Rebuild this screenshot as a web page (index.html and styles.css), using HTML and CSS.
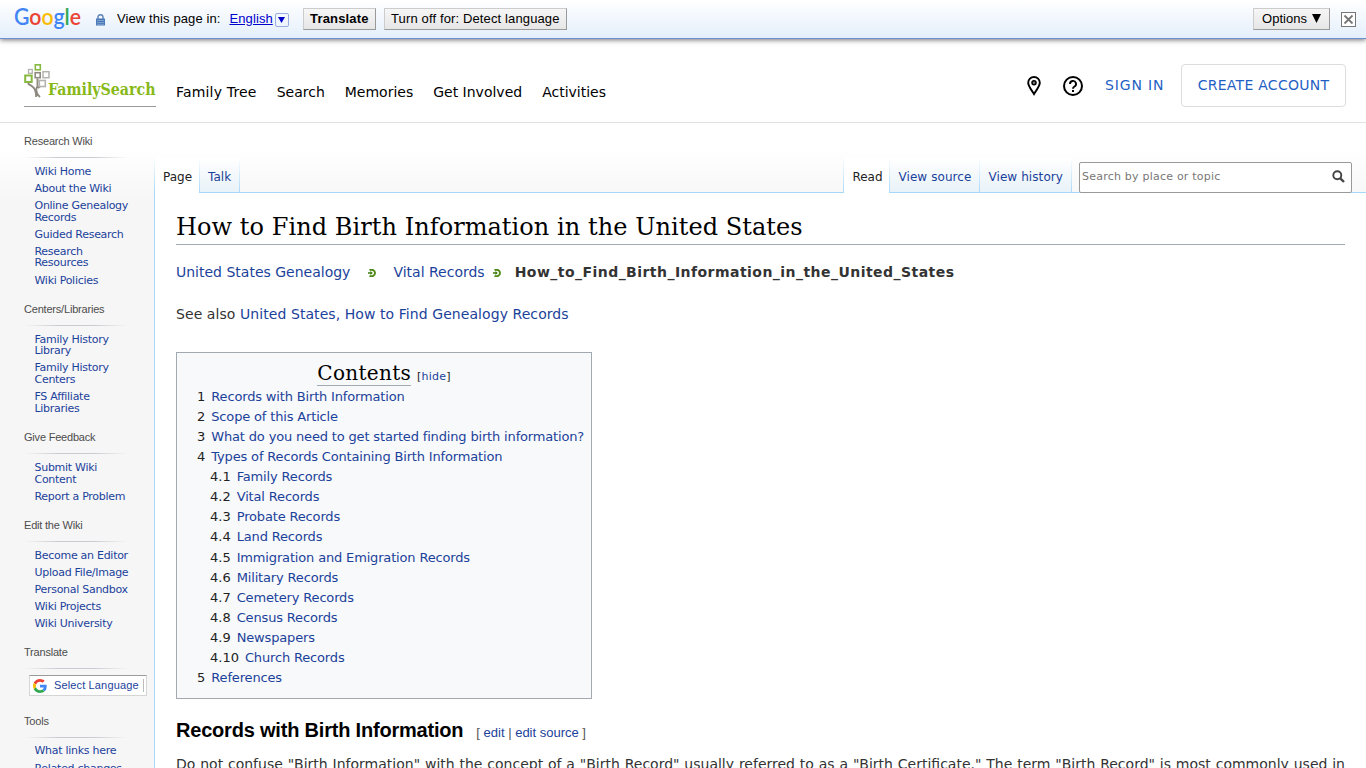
FILE: index.html
```html
<!DOCTYPE html>
<html lang="en">
<head>
    <meta charset="UTF-8">
    <meta name="viewport" content="width=device-width, initial-scale=1.0">
    <title>How to Find Birth Information in the United States</title>
    <link rel="stylesheet" href="styles.css">
</head>
<body>
    <div class="translate-bar">
        <svg class="google-logo" width="69" height="30" viewBox="0 0 69 30">
            <text x="0" y="23" textLength="67" lengthAdjust="spacingAndGlyphs"><tspan fill="#4285f4">G</tspan><tspan fill="#ea4335">o</tspan><tspan fill="#fbbc05">o</tspan><tspan fill="#4285f4">g</tspan><tspan fill="#34a853">l</tspan><tspan fill="#ea4335">e</tspan></text>
        </svg>
        <svg class="lock" width="9" height="12" viewBox="0 0 9 12">
            <path d="M2 5V3a2.5 2.3 0 0 1 5 0v2" fill="none" stroke="#5c84b8" stroke-width="1.4"/>
            <rect x="0" y="4.5" width="9" height="7" fill="#4a79b8"/>
            <path d="M1 6.5h7M1 8.5h7M1 10.3h7" stroke="#8fb0da" stroke-width=".7"/>
        </svg>
        <span class="view-label">View this page in:</span>
        <a class="lang" href="#">English</a>
        <span class="lang-arrow"><svg width="7" height="6" viewBox="0 0 7 6"><path d="M0 0h7L3.5 6z" fill="#0000cc"/></svg></span>
        <button class="bar-btn btn-translate">Translate</button>
        <button class="bar-btn btn-off">Turn off for: Detect language</button>
        <button class="bar-btn btn-options">Options <svg width="9" height="9" viewBox="0 0 9 9"><path d="M0 0h9L4.5 9z" fill="#000"/></svg></button>
        <svg class="close" width="15" height="15" viewBox="0 0 15 15">
            <rect x=".5" y=".5" width="14" height="14" fill="#fff" stroke="#777"/>
            <path d="M3.5 3.5l8 8M11.5 3.5l-8 8" stroke="#777" stroke-width="1.8"/>
        </svg>
    </div>

    <header class="header">
        <a class="logo" href="#">
            <svg width="132" height="42" viewBox="0 0 132 42">
                <g fill="none" stroke="#8f8a80">
                    <path d="M4.500 18.500V20C9 22.500 12 24 12.200 33M13.500 14.500V22C11.500 25 12 30 16 33M14 24L16 22.500" stroke-width="1.900"/>
                    <rect x="11.200" y="8.700" width="5" height="5" stroke-width="1.600"/>
                    <rect x="4.500" y="5.500" width="3.800" height="3.800" stroke="#b4b2ae" stroke-width="1.300"/>
                    <rect x="19" y="7.700" width="6" height="6" stroke="#b4b2ae" stroke-width="1.500"/>
                    <rect x="15.300" y="16.500" width="6" height="6" stroke="#b4b2ae" stroke-width="1.600"/>
                    <rect x="11.300" y=".8" width="5" height="5" stroke="#87b940" stroke-width="1.600"/>
                    <rect x="1.200" y="11.500" width="6.500" height="6.500" stroke="#87b940" stroke-width="2"/>
                </g>
                <text class="logo-text" x="24" y="31" textLength="107.500" lengthAdjust="spacingAndGlyphs">FamilySearch</text>
            </svg>
        </a>
        <nav class="nav">
            <a href="#">Family Tree</a>
            <a href="#">Search</a>
            <a href="#">Memories</a>
            <a href="#">Get Involved</a>
            <a href="#">Activities</a>
        </nav>
        <div class="account">
            <svg class="pin" width="14" height="20" viewBox="0 0 14 20">
                <path d="M7 18C5 14.500 1.200 10.500 1.200 6.800a5.800 5.800 0 0 1 11.600 0C12.800 10.500 9 14.500 7 18z" fill="none" stroke="#000" stroke-width="1.900"/>
                <circle cx="7" cy="6.700" r="2" fill="#777" stroke="#000" stroke-width="1.500"/>
            </svg>
            <svg class="help" width="20" height="20" viewBox="0 0 20 20">
                <circle cx="10" cy="10" r="9" fill="none" stroke="#000" stroke-width="2"/>
                <path d="M7 8a3 3 0 1 1 4.500 2.500C10.300 11.200 10 11.600 10 12.700" fill="none" stroke="#000" stroke-width="1.900"/>
                <rect x="9" y="14" width="2" height="2"/>
            </svg>
            <a class="sign-in" href="#">SIGN IN</a>
            <a class="create" href="#">CREATE ACCOUNT</a>
        </div>
    </header>

    <div class="page">
        <aside class="sidebar">
            <section class="portal">
                <h3>Research Wiki</h3>
                <ul>
                    <li><a href="#">Wiki Home</a></li>
                    <li><a href="#">About the Wiki</a></li>
                    <li><a href="#">Online Genealogy<br>Records</a></li>
                    <li><a href="#">Guided Research</a></li>
                    <li><a href="#">Research<br>Resources</a></li>
                    <li><a href="#">Wiki Policies</a></li>
                </ul>
            </section>
            <section class="portal">
                <h3>Centers/Libraries</h3>
                <ul>
                    <li><a href="#">Family History<br>Library</a></li>
                    <li><a href="#">Family History<br>Centers</a></li>
                    <li><a href="#">FS Affiliate<br>Libraries</a></li>
                </ul>
            </section>
            <section class="portal">
                <h3>Give Feedback</h3>
                <ul>
                    <li><a href="#">Submit Wiki<br>Content</a></li>
                    <li><a href="#">Report a Problem</a></li>
                </ul>
            </section>
            <section class="portal">
                <h3>Edit the Wiki</h3>
                <ul>
                    <li><a href="#">Become an Editor</a></li>
                    <li><a href="#">Upload File/Image</a></li>
                    <li><a href="#">Personal Sandbox</a></li>
                    <li><a href="#">Wiki Projects</a></li>
                    <li><a href="#">Wiki University</a></li>
                </ul>
            </section>
            <section class="portal">
                <h3>Translate</h3>
                <div class="gadget">
                    <svg width="14" height="14" viewBox="0 0 48 48">
                        <path fill="#ea4335" d="M24 9.500c3.540 0 6.710 1.220 9.210 3.600l6.850-6.850C35.900 2.380 30.470 0 24 0 14.620 0 6.510 5.380 2.560 13.220l7.980 6.190C12.430 13.720 17.740 9.500 24 9.500z"/>
                        <path fill="#4285f4" d="M46.980 24.550c0-1.570-.15-3.090-.38-4.550H24v9.020h12.940c-.58 2.960-2.260 5.480-4.780 7.180l7.730 6c4.510-4.180 7.090-10.360 7.090-17.650z"/>
                        <path fill="#fbbc05" d="M10.530 28.590c-.48-1.450-.76-2.990-.76-4.590s.27-3.140.76-4.590l-7.980-6.190C.92 16.460 0 20.120 0 24s.92 7.540 2.560 10.780l7.970-6.190z"/>
                        <path fill="#34a853" d="M24 48c6.480 0 11.930-2.130 15.890-5.810l-7.730-6c-2.150 1.450-4.920 2.300-8.160 2.300-6.260 0-11.570-4.220-13.470-9.910l-7.980 6.190C6.510 42.620 14.620 48 24 48z"/>
                    </svg>
                    <a href="#">Select Language</a>
                </div>
            </section>
            <section class="portal">
                <h3>Tools</h3>
                <ul>
                    <li><a href="#">What links here</a></li>
                    <li><a href="#">Related changes</a></li>
                </ul>
            </section>
        </aside>

        <main class="main">
            <div class="tabs">
                <a class="tab selected" href="#">Page</a>
                <a class="tab" href="#">Talk</a>
                <div class="tabs-right">
                    <a class="tab selected" href="#">Read</a>
                    <a class="tab" href="#">View source</a>
                    <a class="tab" href="#">View history</a>
                </div>
                <div class="search">
                    <span>Search by place or topic</span>
                    <svg width="13" height="13" viewBox="0 0 13 13">
                        <circle cx="5.300" cy="5.300" r="4" fill="none" stroke="#444" stroke-width="1.900"/>
                        <path d="M8.300 8.300l3.700 3.700" stroke="#444" stroke-width="2.400"/>
                    </svg>
                </div>
            </div>

            <article class="content">
                <h1>How to Find Birth Information in the United States</h1>
                <p class="crumbs">
                    <a class="crumb-first" href="#">United States Genealogy</a>
                    <svg class="arrow arrow-first" width="8" height="8" viewBox="0 0 8 8"><path d="M1.500 1C4 .2 7 1 7 4S4 7.800 1.500 7" fill="none" stroke="#4f8a14" stroke-width="1.900"/><path d="M0 3.200h2.500V2L4.800 4 2.500 6V4.800H0z" fill="#3c7a0c"/></svg>
                    <a class="crumb-second" href="#">Vital Records</a>
                    <svg class="arrow arrow-second" width="8" height="8" viewBox="0 0 8 8"><path d="M1.500 1C4 .2 7 1 7 4S4 7.800 1.500 7" fill="none" stroke="#4f8a14" stroke-width="1.900"/><path d="M0 3.200h2.500V2L4.800 4 2.500 6V4.800H0z" fill="#3c7a0c"/></svg>
                    <strong>How_to_Find_Birth_Information_in_the_United_States</strong>
                </p>
                <p class="see-also">See also <a href="#">United States, How to Find Genealogy Records</a></p>

                <div class="toc">
                    <div class="toc-title"><h2>Contents</h2><span class="toggle">[<a href="#">hide</a>]</span></div>
                    <ul>
                        <li><span>1</span><a href="#">Records with Birth Information</a></li>
                        <li><span>2</span><a href="#">Scope of this Article</a></li>
                        <li><span>3</span><a href="#">What do you need to get started finding birth information?</a></li>
                        <li><span>4</span><a href="#">Types of Records Containing Birth Information</a></li>
                        <li class="sub"><span>4.1</span><a href="#">Family Records</a></li>
                        <li class="sub"><span>4.2</span><a href="#">Vital Records</a></li>
                        <li class="sub"><span>4.3</span><a href="#">Probate Records</a></li>
                        <li class="sub"><span>4.4</span><a href="#">Land Records</a></li>
                        <li class="sub"><span>4.5</span><a href="#">Immigration and Emigration Records</a></li>
                        <li class="sub"><span>4.6</span><a href="#">Military Records</a></li>
                        <li class="sub"><span>4.7</span><a href="#">Cemetery Records</a></li>
                        <li class="sub"><span>4.8</span><a href="#">Census Records</a></li>
                        <li class="sub"><span>4.9</span><a href="#">Newspapers</a></li>
                        <li class="sub"><span>4.10</span><a href="#">Church Records</a></li>
                        <li><span>5</span><a href="#">References</a></li>
                    </ul>
                </div>

                <div class="section-head">
                    <h2>Records with Birth Information</h2>
                    <span class="edit">[ <a href="#">edit</a> | <a href="#">edit source</a> ]</span>
                </div>
                <p class="text">Do not confuse "Birth Information" with the concept of a "Birth Record" usually referred to as a "Birth Certificate." The term "Birth Record" is most commonly used in</p>
            </article>
        </main>
    </div>
</body>
</html>
```
FILE: styles.css
```css
* {
    box-sizing: border-box;
}
body {
    margin: 0;
    height: 768px;
    overflow: hidden;
    display: flex;
    flex-direction: column;
    background: #fff;
    font-family: Verdana, "DejaVu Sans", sans-serif;
    color: #333;
}
a {
    color: #1b429b;
    text-decoration: none;
}
h1, h2, h3, p, ul {
    margin: 0;
    padding: 0;
    font-weight: normal;
}
ul {
    list-style: none;
}
svg {
    display: block;
    flex: none;
}

/* translate toolbar */
.translate-bar {
    height: 39px;
    flex: none;
    display: flex;
    align-items: flex-start;
    padding: 8px 10px 0 14px;
    border-bottom: 1px solid #6b8fd0;
    background: linear-gradient(#fff, #e4effb);
    box-shadow: 0 1px 5px rgba(0, 0, 0, .55);
    font: 13px/21px "Liberation Sans", Arial, sans-serif;
    color: #000;
    z-index: 1;
}
.google-logo {
    margin-top: -6px;
    font: 23px Lato, sans-serif;
    font-weight: 600;
}
.lock {
    margin: 6px 12px 0 13px;
}
.view-label {
    letter-spacing: .1px;
}
.lang {
    margin: 0 2px 0 9px;
    color: #0000cc;
    text-decoration: underline;
    letter-spacing: .1px;
}
.lang-arrow {
    width: 14px;
    height: 14px;
    margin-top: 5px;
    border: 1px solid #9aace0;
    border-radius: 2px;
    display: grid;
    place-items: center;
}
.bar-btn {
    height: 22px;
    padding: 0 0 2px;
    border: 1px solid;
    border-color: #ccc #999 #999 #ccc;
    background: linear-gradient(#f6f6f6, #e6e6e6);
    font: 13px/19px "Liberation Sans", Arial, sans-serif;
    color: #000;
}
.btn-translate {
    width: 73px;
    margin-left: 14px;
    font-weight: bold;
    letter-spacing: .15px;
}
.btn-off {
    width: 183px;
    margin-left: 8px;
    letter-spacing: .13px;
}
.btn-options {
    width: 77px;
    margin-left: auto;
    display: flex;
    align-items: center;
    justify-content: center;
    gap: 5px;
}
.close {
    margin: 4px 0 0 11px;
}

/* site header */
.header {
    height: 84px;
    flex: none;
    display: flex;
    padding: 25px 20px 0 24px;
    border-bottom: 1px solid #e2e2e2;
}
.logo {
    width: 132px;
    height: 43px;
    border-bottom: 1px solid #999;
}
.logo-text {
    font: bold 16px "DejaVu Serif", serif;
    fill: #87b919;
}
.nav {
    display: flex;
    gap: 20px;
    margin: 18px 0 0 20px;
    font-size: 14px;
    line-height: 20px;
}
.nav a {
    color: #000;
}
.nav a:first-child {
    letter-spacing: .18px;
}
.account {
    display: flex;
    align-items: center;
    height: 43px;
    margin-left: auto;
    font-size: 14px;
}
.account a {
    color: #1f5fc4;
}
.help {
    margin: 0 22px 0 22px;
}
.sign-in {
    width: 60px;
    padding-bottom: 1px;
    letter-spacing: .85px;
    white-space: nowrap;
}
.create {
    width: 165px;
    height: 43px;
    margin-left: 16px;
    border: 1px solid #ddd;
    border-radius: 4px;
    line-height: 41px;
    letter-spacing: .27px;
    text-align: center;
}

/* page columns */
.page {
    flex: 1;
    min-height: 0;
    display: grid;
    grid-template-columns: 154px 1fr;
    background: #f6f6f6 linear-gradient(#fff 25px, #f6f6f6 80px);
}
.sidebar {
    height: 645px;
    overflow: hidden;
    padding: 10px 0 0 24px;
}
.portal {
    margin-bottom: 9.6px;
}
.portal h3 {
    height: 32.7px;
    width: 104px;
    background: linear-gradient(to right, transparent, #c8ccd1 33%, #c8ccd1 66%, transparent) no-repeat 0 24px / 100% 1px;
    font: 11px/16px "Liberation Sans", Arial, sans-serif;
    letter-spacing: -.2px;
    color: #4d4d4d;
}
.portal li {
    margin: 0 0 5.4px 10.500px;
    font-size: 11px;
    line-height: 11.700px;
    letter-spacing: -.28px;
    white-space: nowrap;
}
.portal li:last-child {
    margin-bottom: 0;
}
.portal ul {
    padding-bottom: 5px;
}
.gadget {
    width: 118px;
    height: 21px;
    margin: -1.7px 0 16.5px 5px;
    padding-left: 3px;
    display: flex;
    align-items: center;
    gap: 7px;
    background: #fff;
    border: 1px solid #d5d5d5;
    border-top-color: #9b9b9b;
    font: 11px/17px "Liberation Sans", Arial, sans-serif;
}
.gadget a {
    padding-right: 4px;
    border-right: 1px solid #bbb;
    line-height: 13px;
    letter-spacing: .14px;
    white-space: nowrap;
}

/* tabs row */
.main {
    min-width: 0;
}
.tabs {
    height: 70px;
    display: flex;
    align-items: flex-end;
    padding-right: 14px;
    background: linear-gradient(#a7d7f9, #a7d7f9) no-repeat 0 100% / 100% 1px;
}
.tab {
    height: 35px;
    padding: 9px 8px 0;
    border-right: 1px solid;
    border-image: linear-gradient(#fff, #a7d7f9) 1;
    background: linear-gradient(#fff, #e8f2f8) no-repeat 0 0 / 100% 34px;
    font-size: 12px;
    line-height: 20px;
    letter-spacing: .08px;
    white-space: nowrap;
}
.tab.selected {
    background: #fff;
    color: #222;
    letter-spacing: 0;
}
.tabs > .tab:first-child {
    width: 46px;
    border-left: 1px solid;
}
.tabs-right {
    display: flex;
    margin-left: auto;
}
.tabs-right .tab:first-child {
    width: 47px;
    border-left: 1px solid;
}
.search {
    width: 273px;
    height: 31px;
    margin-left: 7px;
    padding: 0 6px 2px 2px;
    display: flex;
    align-items: center;
    justify-content: space-between;
    background: #fff;
    border: 1px solid #999;
    border-radius: 2px;
    font-size: 11px;
    letter-spacing: .22px;
    color: #777;
}

/* article */
.content {
    height: 575px;
    overflow: hidden;
    padding: 14px 21px 0;
    background: #fff;
    border-left: 1px solid #a7d7f9;
}
h1 {
    height: 38px;
    border-bottom: 1px solid #a2a9b1;
    font: 24px/40px "DejaVu Serif", serif;
    letter-spacing: .06px;
    color: #000;
    white-space: nowrap;
}
.crumbs {
    display: flex;
    align-items: center;
    margin-top: 17px;
    font-size: 14px;
    line-height: 20px;
    white-space: nowrap;
}
.arrow-first {
    margin: 2px 17px 0 18px;
}
.arrow-second {
    margin: 2px 14px 0 8px;
}
.crumbs strong {
    letter-spacing: .46px;
}
.see-also {
    margin-top: 22px;
    font-size: 14px;
    line-height: 20px;
    letter-spacing: .07px;
}
.toc {
    width: 416px;
    height: 347px;
    margin-top: 28px;
    padding: 7px;
    background: #f8f9fa;
    border: 1px solid #a2a9b1;
    font-size: 13px;
    color: #222;
}
.toc-title {
    display: flex;
    justify-content: center;
    align-items: baseline;
    height: 27px;
    gap: 6px;
}
.toc-title h2 {
    height: 26px;
    border-bottom: 1px solid #a2a9b1;
    font: 20px/26px "DejaVu Serif", serif;
    letter-spacing: .3px;
    color: #000;
}
.toggle {
    font-size: 11px;
    letter-spacing: .2px;
}
.toc li {
    height: 20.070px;
    padding-left: 13px;
    display: flex;
    gap: 6px;
    line-height: 20px;
    letter-spacing: -.16px;
    white-space: nowrap;
}
.toc li span {
    letter-spacing: 0;
}
.toc .sub {
    padding-left: 26px;
}
.section-head {
    display: flex;
    align-items: baseline;
    margin-top: 17px;
    font-family: "Liberation Sans", Arial, sans-serif;
}
.section-head h2 {
    font-size: 20px;
    font-weight: bold;
    line-height: 28px;
    letter-spacing: -.2px;
    color: #000;
}
.edit {
    margin-left: 13px;
    font-size: 13px;
    color: #555;
}
.text {
    margin-top: 9px;
    font-size: 14px;
    line-height: 22px;
    text-align-last: justify;
    white-space: nowrap;
}
```
